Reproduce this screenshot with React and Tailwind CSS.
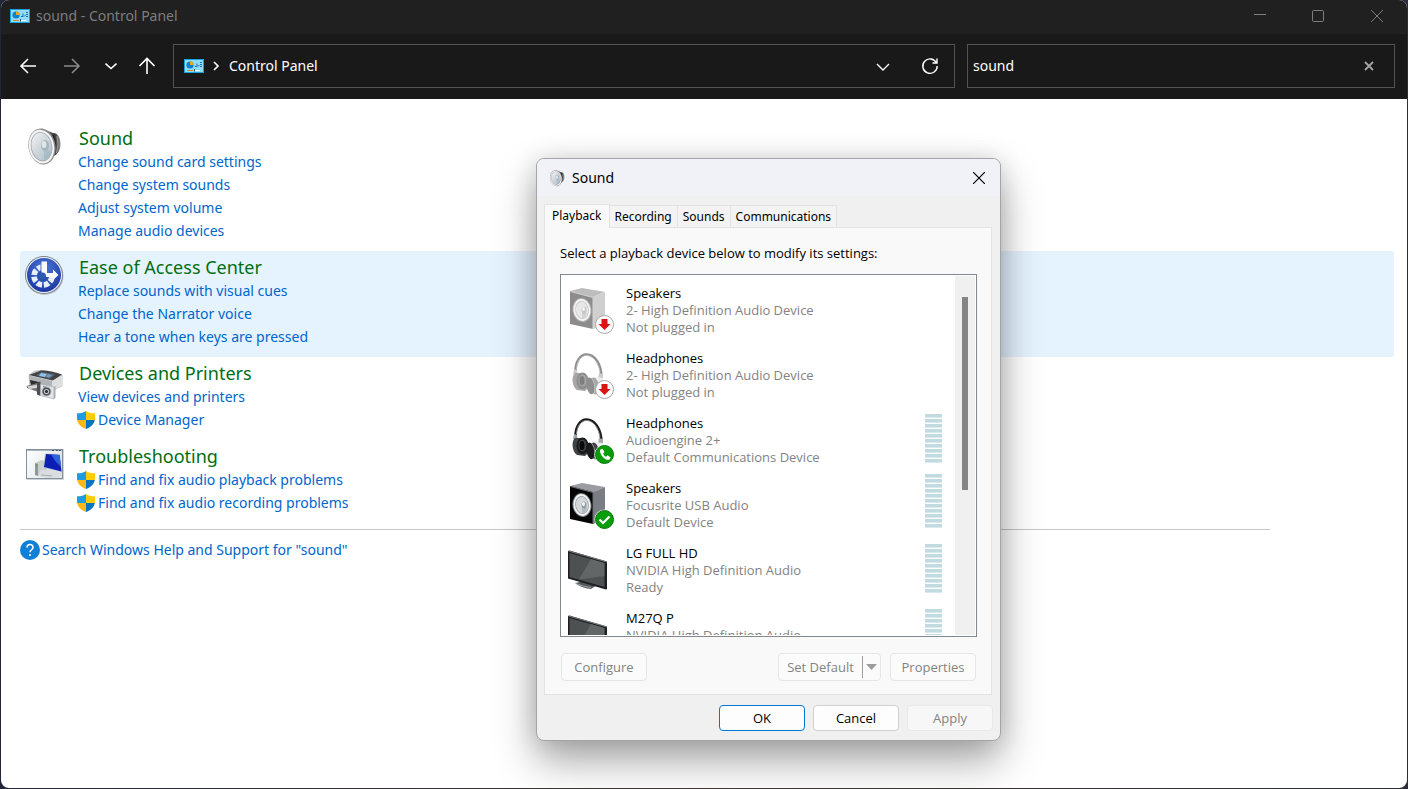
import React, { useState } from 'react'

const BLUE_LINK = "text-[#0066cc] hover:underline"

const CATEGORIES = [
  {
    title: "Sound",
    icon: "sound",
    links: [
      { label: "Change sound card settings" },
      { label: "Change system sounds" },
      { label: "Adjust system volume" },
      { label: "Manage audio devices" },
    ],
  },
  {
    title: "Ease of Access Center",
    icon: "access",
    active: true,
    links: [
      { label: "Replace sounds with visual cues" },
      { label: "Change the Narrator voice" },
      { label: "Hear a tone when keys are pressed" },
    ],
  },
  {
    title: "Devices and Printers",
    icon: "printer",
    links: [
      { label: "View devices and printers" },
      { label: "Device Manager", shield: true },
    ],
  },
  {
    title: "Troubleshooting",
    icon: "trouble",
    links: [
      { label: "Find and fix audio playback problems", shield: true },
      { label: "Find and fix audio recording problems", shield: true },
    ],
  },
]

const DEVICES = [
  { id: 1, name: "Speakers", driver: "2- High Definition Audio Device", status: "Not plugged in", icon: "speaker", muted: true, badge: "down", bars: 0 },
  { id: 2, name: "Headphones", driver: "2- High Definition Audio Device", status: "Not plugged in", icon: "headphones", muted: true, badge: "down", bars: 0 },
  { id: 3, name: "Headphones", driver: "Audioengine 2+", status: "Default Communications Device", icon: "headphones", badge: "phone", bars: 10 },
  { id: 4, name: "Speakers", driver: "Focusrite USB Audio", status: "Default Device", icon: "speaker", badge: "check", bars: 11 },
  { id: 5, name: "LG FULL HD", driver: "NVIDIA High Definition Audio", status: "Ready", icon: "tv", bars: 10 },
  { id: 6, name: "M27Q P", driver: "NVIDIA High Definition Audio", icon: "tv", bars: 10 },
]

const TABS = ["Playback", "Recording", "Sounds", "Communications"]

const PanelIcon = () => (
  <svg width="20" height="14" viewBox="0 0 20 14" className="shrink-0" aria-hidden="true">
    <rect width="20" height="14" fill="#1ba1e2" />
    <rect x="1" y="1" width="18" height="12" fill="#8fdcfb" />
    <circle cx="6" cy="6" r="3.6" fill="#0f7fd0" />
    <path d="M6 6V2.4A3.6 3.6 0 0 1 9.600 6Z" fill="#f5a31a" />
    <path d="M11 7.500h2V4.500M14 7.500l1.500-1.500M16 3.500h2M16 5.500h2M16 7.500h2" stroke="#1f6fb5" fill="none" />
    <path d="M3 11.500h6" stroke="#d98c1c" />
    <path d="M10 11.500h6" stroke="#ffffff" />
    <path d="M10.500 10v2.500" stroke="#35506b" />
  </svg>
)

const ShieldIcon = () => (
  <svg width="18" height="18" viewBox="0 0 18 18" className="shrink-0 -ml-px" aria-hidden="true">
    <clipPath id="shield">
      <path d="M9 0C11 1.500 14 2.300 18 2.300V7C18 12.500 14.500 16 9 18C3.500 16 0 12.500 0 7V2.300C4 2.300 7 1.500 9 0Z" />
    </clipPath>
    <g clipPath="url(#shield)">
      <path d="M0 0h9v9H0z" fill="#1f9be0" />
      <path d="M9 0h9v9H9z" fill="#ffcb05" />
      <path d="M0 9h9v9H0z" fill="#fdb813" />
      <path d="M9 9h9v9H9z" fill="#0a74c4" />
    </g>
  </svg>
)

const SpeakerCone = ({ size, className }) => (
  <svg width={size} height={size} viewBox="0 0 40 40" className={className} aria-hidden="true">
    <defs>
      <linearGradient id="coneBack" x1="0" x2="1">
        <stop offset="0" stopColor="#8a8a8a" />
        <stop offset="0.700" stopColor="#3a3a3a" />
        <stop offset="1" stopColor="#8f8f8f" />
      </linearGradient>
      <linearGradient id="coneFace" x1="0" y1="0" x2="0.600" y2="1">
        <stop offset="0" stopColor="#f2f4f5" />
        <stop offset="0.500" stopColor="#d3dade" />
        <stop offset="1" stopColor="#b4c6cf" />
      </linearGradient>
    </defs>
    <path d="M18 2.500L29 7C33 6.500 36.500 11 36.500 18C36.500 25 33 29 29.500 30L22 38Z" fill="url(#coneBack)" />
    <path d="M29 9Q33 18 29.500 29" fill="none" stroke="#202020" strokeWidth="1.500" />
    <path d="M33 10Q35.500 18 32.500 27" fill="none" stroke="#a0a0a0" />
    <g transform="rotate(-10 18 20.500)">
      <ellipse cx="18" cy="20.500" rx="13.500" ry="18" fill="#8a8c8e" />
      <ellipse cx="17.500" cy="20.500" rx="12.600" ry="17" fill="#f4f4f4" />
      <ellipse cx="17.500" cy="20.500" rx="10.700" ry="14.800" fill="#9fa5a8" />
      <ellipse cx="17.500" cy="20.500" rx="10" ry="14" fill="url(#coneFace)" />
    </g>
    <path d="M20 19L27 27Q26 32 20 34Z" fill="#8fa9b7" opacity="0.400" />
    <ellipse cx="21" cy="19.500" rx="4" ry="5.500" fill="#a6b5bf" />
    <ellipse cx="20" cy="18.500" rx="2.400" ry="3.600" fill="#dfe6ea" />
  </svg>
)

const AccessIcon = () => (
  <svg width="40" height="40" viewBox="0 0 40 40" aria-hidden="true">
    <defs>
      <radialGradient id="accessBall" cx="0.500" cy="0.300" r="0.750">
        <stop offset="0" stopColor="#4b78d8" />
        <stop offset="1" stopColor="#17339f" />
      </radialGradient>
      <clipPath id="accessQuarters">
        <path d="M0 0H16.500V21H40V40H0Z" />
      </clipPath>
    </defs>
    <circle cx="20.500" cy="21" r="19" fill="#8d939c" opacity="0.500" />
    <circle cx="20" cy="20" r="19" fill="#7c828c" />
    <circle cx="20" cy="20" r="18" fill="#f3f5f8" />
    <circle cx="20" cy="20" r="17" fill="url(#accessBall)" />
    <g clipPath="url(#accessQuarters)">
      <circle cx="19" cy="21" r="9" fill="none" stroke="#e9effa" strokeWidth="5.600" strokeDasharray="5.260 1.808" strokeDashoffset="-0.900" />
    </g>
    <circle cx="18.500" cy="21" r="5" fill="#2450a8" />
    <path d="M17.500 6.500H23V18H29V14.500L34.500 20L29 25V22H22L17.500 17.500Z" fill="#ffffff" />
    <circle cx="18.500" cy="21" r="3.500" fill="#2c5bb0" />
  </svg>
)

const PrinterIcon = () => (
  <svg width="40" height="40" viewBox="0 0 40 40" aria-hidden="true">
    <path d="M5 14L11 10Q19 8.500 29 11L38 14V25L27 30L6 26Z" fill="#d5d7d9" stroke="#88898b" strokeWidth="0.500" />
    <path d="M5 14L17 9.500Q24 9 38 13.500L29 19.500Z" fill="#3f4245" />
    <path d="M12 14L18 11L31 13.500L26 17.500Z" fill="#65696d" />
    <path d="M17 12l6 1-2 3-6-1Z" fill="#8fc0ee" />
    <path d="M24 13l4 1-3 2.500-3-.5Z" fill="#6b9bc9" />
    <path d="M5 14.500L28 20V25L6 21Z" fill="#b1b4b7" />
    <path d="M28 20L38 14.500V25L28 30Z" fill="#dcdee0" />
    <path d="M6 19L15 21V27L7 25Z" fill="#2a2c2e" />
    <path d="M2.500 25L13 22L16 23V30L14 31L3 27Z" fill="#77726f" />
    <path d="M3 25.500l11-2 1 3-9 1.500Z" fill="#d4d6d8" />
    <path d="M13 21.500L16.500 20.500V35L13 33.500Z" fill="#4b4d50" />
    <path d="M16.500 23L30 26V38L16.500 34.500Z" fill="#e3e5e8" stroke="#8b8f93" strokeWidth="0.500" />
    <path d="M30 26L31.500 25V36.500L30 38Z" fill="#a9adb1" />
    <circle cx="22.500" cy="30.500" r="5" fill="#b9bdc1" />
    <circle cx="22.500" cy="30.500" r="4" fill="#4b4f54" />
    <circle cx="22.500" cy="30.500" r="2.600" fill="#c3c8cc" />
    <circle cx="22.500" cy="30.500" r="1.500" fill="#22262a" />
    <path d="M19 25.500l3 .8" stroke="#6f7479" />
  </svg>
)

const TroubleIcon = () => (
  <svg width="40" height="40" viewBox="0 0 40 40" aria-hidden="true">
    <defs>
      <linearGradient id="windowPane" x1="0" x2="1" y2="0.500">
        <stop offset="0" stopColor="#ffffff" />
        <stop offset="1" stopColor="#dfe2e5" />
      </linearGradient>
    </defs>
    <rect x="2" y="5" width="38" height="31" rx="1" fill="#cfd3d6" />
    <rect x="2.500" y="5.500" width="36" height="29" fill="url(#windowPane)" stroke="#81909c" />
    <path d="M3 6.500h35" stroke="#a9b6c1" />
    <path d="M28 6.500h2M32 6.500h2M35 6.500h2" stroke="#4c5a68" />
    <path d="M11 19L18 16L23 17V31L13 32Z" fill="#c9cdd0" />
    <path d="M11 19L14 20V32L11 31Z" fill="#8f9798" />
    <path d="M12.500 20v2" stroke="#52a552" />
    <path d="M21 9.500L36 10L38 28L19 24Z" fill="#c2cad6" />
    <path d="M22 10L35.500 11L37.500 27.500L20 23Z" fill="#0c1fb4" />
    <path d="M27 10.500L35.500 11L37 23Q31 18 27 10.500Z" fill="#2f63dc" />
    <path d="M17 26L26 26L37 29V32L24 34L14 32Z" fill="#dadddf" />
    <path d="M17 31l11 1" stroke="#a7adb0" />
  </svg>
)

const CategoryIcon = ({ type }) => {
  if (type === "sound") return <SpeakerCone size={40} />
  if (type === "access") return <AccessIcon />
  if (type === "printer") return <PrinterIcon />
  return <TroubleIcon />
}

const SpeakerShape = ({ muted }) => (
  <g>
    <path d="M3 7L15 4L38 8L26 13Z" fill={muted ? "#bdbdbd" : "#9a9ca1"} />
    <path d="M26 13L38 8V40L26 45Z" fill={muted ? "#cfcfcf" : "#7b7d85"} />
    <path d="M3 7L26 13V45L3 40Z" fill={muted ? "#8c8c8c" : "#050505"} />
    <path d="M3.500 7.500L26 13.500V45" fill="none" stroke={muted ? "#d5d5d5" : "#6b6d72"} />
    <g transform="rotate(-8 15 26)">
      <ellipse cx="15" cy="26" rx="9.500" ry="12" fill={muted ? "#b5b5b5" : "#77797c"} />
      <ellipse cx="15" cy="26" rx="8.500" ry="11" fill="#f3f3f3" />
      <ellipse cx="15" cy="26" rx="6.800" ry="9" fill={muted ? "#c9c9c9" : "#a2a6a9"} />
      <ellipse cx="15" cy="26" rx="6" ry="8.200" fill={muted ? "#e8e8e8" : "#d5d8da"} />
    </g>
    <path d="M15 26L20 29Q19 34 15 34Z" fill={muted ? "#d2d2d2" : "#b3bbc0"} />
    <ellipse cx="17" cy="26" rx="2.500" ry="3.500" fill={muted ? "#c4c4c4" : "#94a0a8"} />
    <ellipse cx="16.500" cy="25" rx="1.500" ry="2" fill="#f5f5f5" />
  </g>
)

const HeadphonesShape = ({ muted }) => {
  const dark = muted ? "#8e8e8e" : "#1b1b1c"
  const mid = muted ? "#a6a6a6" : "#414346"
  const light = muted ? "#cbcbcb" : "#a5a8ab"
  return (
    <g>
      <path d="M8.500 24C8 13 13 5.500 19.500 5.500C28 5.500 34 15 34.500 28" fill="none" stroke={dark} strokeWidth="2.600" />
      <path d="M9.500 20C10 12 14 6.500 19.500 6.500C26.500 6.500 31.500 14 33 23" fill="none" stroke={light} strokeWidth="0.800" />
      <path d="M7 20l3 1 1 5-5-1Z" fill={light} />
      <path d="M32 24l4 1v6l-5-1Z" fill={light} />
      <path d="M8 24C4 27 5 38 10 41L18 42C24 38 22 26 17 24Z" fill={mid} />
      <ellipse cx="15.500" cy="32" rx="6" ry="8.500" fill={dark} />
      <ellipse cx="15.500" cy="31.500" rx="4" ry="6" fill={mid} />
      <ellipse cx="15" cy="31.500" rx="2.500" ry="4.500" fill={muted ? "#7e7e7e" : "#080808"} />
      <path d="M27 28L36 29V43L27 46Z" fill="#ececec" />
      <ellipse cx="27.500" cy="37" rx="4.500" ry="8.500" fill={mid} transform="rotate(-10 27 37)" />
      <ellipse cx="23.500" cy="37" rx="4" ry="8.500" fill={dark} transform="rotate(-10 23 37)" />
      <path d="M25 29.500Q29.500 37 27 45" fill="none" stroke={light} strokeWidth="0.800" />
    </g>
  )
}

const TvShape = () => (
  <g>
    <path d="M8 39L18 37L30 41L24 45Q14 44 8 39Z" fill="#55585b" />
    <path d="M9 39.500Q17 43 24 43.500" fill="none" stroke="#a3a6a9" />
    <path d="M1 7L2.500 6.500L40 17.500V45L39 45.500L1 34.500Z" fill="#1d1f20" />
    <path d="M2.500 9L37.500 19V43L2.500 33Z" fill="#4e5152" />
    <path d="M24 15L37.500 19V32L12 35.500Z" fill="#686b6c" opacity="0.800" />
    <path d="M1.500 7L40 18" stroke="#8f9294" strokeWidth="0.800" />
  </g>
)

const Badge = ({ type }) => {
  if (type === "down") {
    return (
      <g>
        <circle cx="37.500" cy="40.500" r="9" fill="#ffffff" stroke="#a8a8a8" />
        <path d="M34.500 35h6v5h3l-6 6-6-6h3Z" fill="#dd1212" />
      </g>
    )
  }
  return (
    <g>
      <circle cx="37.500" cy="40.500" r="10" fill="#ffffff" />
      <circle cx="37.500" cy="40.500" r="9" fill="#0a9d0a" stroke="#067806" />
      {type === "check" ? (
        <path d="M32.500 40.500l3.500 3.500 6.500-6.500" fill="none" stroke="#ffffff" strokeWidth="2.200" />
      ) : (
        <path d="M33.500 35.500l2-.8 2 3.300-1.400 1.400c.6 1.600 1.400 2.500 3 3.300l1.500-1.400 3 2.200-1 1.900c-1.200 1-3.700.4-6-1.700-2.600-2.400-4.500-6.500-3.100-8.200Z" fill="#ffffff" />
      )}
    </g>
  )
}

const DeviceIcon = ({ device }) => (
  <svg width="48" height="52" viewBox="0 0 48 52" className="shrink-0" aria-hidden="true">
    {device.icon === "speaker" && <SpeakerShape muted={device.muted} />}
    {device.icon === "headphones" && <HeadphonesShape muted={device.muted} />}
    {device.icon === "tv" && <TvShape />}
    {device.badge && <Badge type={device.badge} />}
  </svg>
)

const Meter = ({ bars }) => (
  <div className="flex w-[17px] shrink-0 flex-col justify-end gap-px" aria-hidden="true">
    {Array.from({ length: bars }).map((_, i) => (
      <div key={i} className="h-1 border-b border-[#d9e9ed] bg-[#c1dbe1]"></div>
    ))}
  </div>
)

const TitleBar = () => (
  <header className="flex h-8 items-center bg-[#202020] pl-[9px] text-[#7d7d7d]">
    <PanelIcon />
    <h1 className="ml-1.5 flex-1 text-sm">sound - Control Panel</h1>
    <button aria-label="Minimize" className="flex h-full w-[58px] items-center justify-center">
      <svg width="12" height="12" viewBox="0 0 12 12" fill="none" stroke="currentColor"><path d="M0 4.500h12" /></svg>
    </button>
    <button aria-label="Maximize" className="flex h-full w-[58px] items-center justify-center">
      <svg width="12" height="12" viewBox="0 0 12 12" fill="none" stroke="currentColor"><rect x="0.500" y="0.500" width="11" height="11" rx="1" /></svg>
    </button>
    <button aria-label="Close" className="flex h-full w-[60px] items-center justify-center">
      <svg width="12" height="12" viewBox="0 0 12 12" fill="none" stroke="currentColor"><path d="M0 0l12 12M12 0L0 12" /></svg>
    </button>
  </header>
)

const Toolbar = () => {
  const [query, setQuery] = useState("sound")

  return (
    <div className="flex items-center border-t-2 border-[#202020] bg-[#191919] pt-2.5 pr-3 pb-[11px] pl-[18px] text-white">
      <nav className="flex items-center">
        <button aria-label="Back">
          <svg width="18" height="18" viewBox="0 0 18 18" fill="none" stroke="currentColor" strokeWidth="1.600"><path d="M17 9H2M9 2L2 9l7 7" /></svg>
        </button>
        <button aria-label="Forward" className="ml-[26px] text-[#8a8a8a]">
          <svg width="18" height="18" viewBox="0 0 18 18" fill="none" stroke="currentColor" strokeWidth="1.600"><path d="M1 9h15M9 2l7 7-7 7" /></svg>
        </button>
        <button aria-label="Recent locations" className="ml-6">
          <svg width="12" height="18" viewBox="0 0 12 18" fill="none" stroke="currentColor" strokeWidth="1.600"><path d="M0.500 6.500L6 11.500l5.500-5" /></svg>
        </button>
        <button aria-label="Up" className="mr-[17px] ml-[21px]">
          <svg width="18" height="18" viewBox="0 0 18 18" fill="none" stroke="currentColor" strokeWidth="1.600"><path d="M9 17V2M1.500 9L9 1.500 16.500 9" /></svg>
        </button>
      </nav>
      <div className="grid h-11 flex-1 grid-cols-[782fr_428fr] gap-3">
        <div className="flex items-center border border-[#535353] pl-2.5">
          <PanelIcon />
          <svg width="8" height="10" viewBox="0 0 8 10" className="ml-2 shrink-0" fill="none" stroke="currentColor" strokeWidth="1.600" aria-hidden="true"><path d="M2 1l4 4-4 4" /></svg>
          <a href="#" className="ml-[9px] flex-1 text-sm">Control Panel</a>
          <button aria-label="Previous locations" className="mr-[31px]">
            <svg width="14" height="18" viewBox="0 0 14 18" fill="none" stroke="currentColor" strokeWidth="1.400"><path d="M1 7l6 6 6-6" /></svg>
          </button>
          <button aria-label="Refresh" className="mr-[15px]">
            <svg width="18" height="18" viewBox="0 0 18 18" fill="none" stroke="currentColor" strokeWidth="1.400"><path d="M15.500 6A7.200 7.200 0 1 0 16.200 9M16 1.500V6h-4.500" /></svg>
          </button>
        </div>
        <div className="flex items-center border border-[#535353] pl-[5px]">
          <input
            aria-label="Search Control Panel"
            value={query}
            onChange={({ target }) => setQuery(target.value)}
            className="min-w-0 flex-1 bg-transparent text-sm outline-none"
          />
          <button aria-label="Clear search" className="mr-5 text-[#a5a5a5]" onClick={() => setQuery("")}>
            <svg width="10" height="10" viewBox="0 0 10 10" fill="none" stroke="currentColor" strokeWidth="1.800"><path d="M1 1l8 8M9 1L1 9" /></svg>
          </button>
        </div>
      </div>
    </div>
  )
}

const Category = ({ item }) => (
  <section className={`flex pt-1 pb-[9px] pl-1 ${item.active ? "rounded-xs bg-[#e5f3ff]" : ""}`}>
    <CategoryIcon type={item.icon} />
    <div className="ml-3.5">
      <h2 className="ml-px text-lg leading-6 text-[#006e12]">
        <a href="#">{item.title}</a>
      </h2>
      <ul>
        {item.links.map((link) => (
          <li key={link.label} className="flex h-[23px] items-center gap-[3px]">
            {link.shield && <ShieldIcon />}
            <a href="#" className={BLUE_LINK}>{link.label}</a>
          </li>
        ))}
      </ul>
    </div>
  </section>
)

const SoundDialog = () => {
  const [tab, setTab] = useState("Playback")

  return (
    <div role="dialog" aria-labelledby="sound-title" className="absolute top-[158px] left-[536px] w-[465px] overflow-hidden rounded-lg border border-[#a5a5a5] bg-[#f0f0f0] font-['Open_Sans','Noto_Sans',sans-serif] text-[13px] text-black shadow-[0_20px_40px_rgba(0,0,0,0.35),0_0_24px_rgba(0,0,0,0.12)]">
      <div className="flex h-[37px] items-center bg-[#f0f2f8] pl-[11px]">
        <SpeakerCone size={18} />
        <h2 id="sound-title" className="ml-1.5 flex-1 font-['Noto_Sans','Open_Sans',sans-serif] text-sm">Sound</h2>
        <button aria-label="Close dialog" className="flex h-full w-[42px] items-center justify-center">
          <svg width="12" height="12" viewBox="0 0 12 12" fill="none" stroke="currentColor" strokeWidth="1.200"><path d="M0 0l12 12M12 0L0 12" /></svg>
        </button>
      </div>

      <div className="px-[7px] pt-[7px]">
        <div role="tablist" className="flex h-6 items-end font-['Noto_Sans','Open_Sans',sans-serif] text-xs">
          {TABS.map((name) => (
            <button
              key={name}
              role="tab"
              aria-selected={tab === name}
              onClick={() => setTab(name)}
              className={tab === name
                ? "relative z-10 -mb-px h-6 border border-b-0 border-[#e3e3e3] bg-[#f9f9f9] px-[7px] pb-0.5"
                : "h-[22px] border border-b-0 border-l-0 border-[#e3e3e3] bg-[#f3f3f3] px-[5px]"}
            >
              {name}
            </button>
          ))}
        </div>

        <div role="tabpanel" className="mr-px border border-[#e3e3e3] bg-[#f9f9f9] pt-[15px] pr-3.5 pb-[13px] pl-[15px]">
          <p id="device-label" className="leading-5">Select a playback device below to modify its settings:</p>
          <div className="mt-[11px] flex h-[363px] border border-[#828790] bg-white p-px">
            <ul aria-labelledby="device-label" className="min-w-0 flex-1 overflow-hidden">
              {DEVICES.map((device) => (
                <li key={device.id} className="flex h-[65px] pr-[13px] pl-[5px]">
                  <div className="pt-2">
                    <DeviceIcon device={device} />
                  </div>
                  <div className="ml-[11px] flex-1 pt-[9px] leading-[17px] text-[#838383]">
                    <p className="text-black">{device.name}</p>
                    <p>{device.driver}</p>
                    {device.status && <p>{device.status}</p>}
                  </div>
                  <div className="flex h-[57px] items-end">
                    <Meter bars={device.bars} />
                  </div>
                </li>
              ))}
            </ul>
            <div className="w-5 bg-[#f0f0f0] pt-[21px]">
              <div className="mx-auto h-[193px] w-1.5 bg-[#858585]"></div>
            </div>
          </div>

          <div className="mt-4 flex">
            <button disabled className="ml-px h-7 w-[86px] rounded border border-[#e6e6e6] bg-[#fbfbfb] text-[#838383]">Configure</button>
            <div className="ml-auto flex h-7 w-[103px] items-center rounded border border-[#e6e6e6] bg-[#fbfbfb] text-[#838383]">
              <button disabled className="flex-1">Set Default</button>
              <button disabled aria-label="More default options" className="flex h-[22px] w-[18px] items-center justify-center border-l border-[#9c9c9c]">
                <svg width="11" height="6" viewBox="0 0 11 6" fill="#9c9c9c"><path d="M0 0h11L5.500 6Z" /></svg>
              </button>
            </div>
            <button disabled className="mr-px ml-[9px] h-7 w-[86px] rounded border border-[#e6e6e6] bg-[#fbfbfb] text-[#838383]">Properties</button>
          </div>
        </div>
      </div>

      <div className="flex justify-end gap-2 px-[7px] pt-2.5 pb-[9px]">
        <button className="h-[26px] w-[86px] rounded border border-[#0078d4] bg-[#fdfdfd]">OK</button>
        <button className="h-[26px] w-[86px] rounded border border-[#d0d0d0] bg-[#fdfdfd]">Cancel</button>
        <button disabled className="h-[26px] w-[86px] rounded border border-[#e9e9e9] bg-[#f7f7f7] text-[#838383]">Apply</button>
      </div>
    </div>
  )
}

const App = () => {
  return (
    <div className="relative flex min-h-screen flex-col bg-linear-to-r from-[#22263a] via-[#453a34] to-[#2b2e38] px-px pb-px font-['Noto_Sans','Open_Sans',sans-serif] text-sm">
      <div className="flex flex-1 flex-col overflow-hidden rounded-lg bg-white">
        <TitleBar />
        <Toolbar />
        <main className="flex-1 pt-[23px] pr-[13px] pb-8 pl-[19px]">
          {CATEGORIES.map((item) => (
            <Category key={item.title} item={item} />
          ))}
          <hr className="mt-1.5 mr-[124px] border-[#c4c7ca]" />
          <div className="mt-2.5 flex items-center gap-0.5">
            <svg width="20" height="20" viewBox="0 0 20 20" className="shrink-0" aria-hidden="true">
              <circle cx="10" cy="10" r="10" fill="#0f80d7" />
              <path d="M7 7.500C7 3.500 13 3.500 13 7.500C13 9.700 10 9.800 10 12.200" fill="none" stroke="#ffffff" strokeWidth="1.500" />
              <circle cx="10" cy="15" r="1" fill="#ffffff" />
            </svg>
            <a href="#" className={BLUE_LINK}>Search Windows Help and Support for "sound"</a>
          </div>
        </main>
      </div>
      <SoundDialog />
    </div>
  )
}

export default App
